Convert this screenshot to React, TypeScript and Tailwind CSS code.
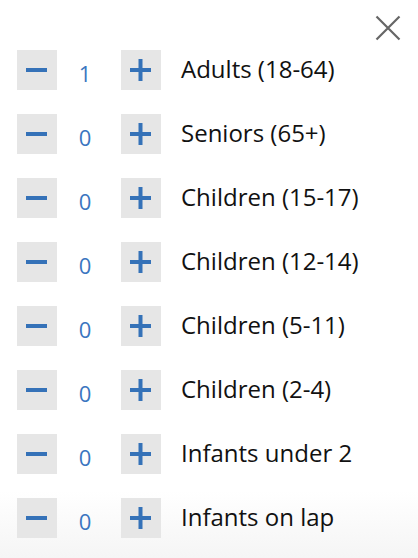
import React from "react";

const rows = [
  { n: 1, label: "Adults (18-64)" },
  { n: 0, label: "Seniors (65+)" },
  { n: 0, label: "Children (15-17)" },
  { n: 0, label: "Children (12-14)" },
  { n: 0, label: "Children (5-11)" },
  { n: 0, label: "Children (2-4)" },
  { n: 0, label: "Infants under 2" },
  { n: 0, label: "Infants on lap" },
];

function Minus() {
  return (
    <svg width="22" height="22" viewBox="0 0 22 22">
      <rect x="0" y="9" width="21" height="4" fill="#3572b8" />
    </svg>
  );
}
function Plus() {
  return (
    <svg width="22" height="22" viewBox="0 0 22 22">
      <rect x="0" y="9" width="21" height="4" fill="#3572b8" />
      <rect x="8.5" y="0" width="4" height="22" fill="#3572b8" />
    </svg>
  );
}

export default function App() {
  return (
    <div
      className="relative w-[418px] h-[558px] overflow-hidden bg-gradient-to-b from-white from-[88%] to-[#f5f5f5]"
      style={{ fontFamily: '"Open Sans", sans-serif' }}
    >
      <button className="absolute top-[15px] right-[17px] w-[26px] h-[26px] flex items-center justify-center">
        <svg width="26" height="26" viewBox="0 0 26 26">
          <path d="M1.5 1.5 L24.5 24.5 M24.5 1.5 L1.5 24.5" stroke="#666" strokeWidth="2.2" />
        </svg>
      </button>
      <div className="flex flex-col gap-6 pt-[50px] pl-[17px]">
        {rows.map((r, i) => (
          <div key={i} className="flex items-center h-10">
            <div className="w-10 h-10 bg-[#e6e6e6] flex items-center justify-center">
              <Minus />
            </div>
            <div className="w-[56px] text-center pt-[5px] text-[22px] text-[#3a76c0] leading-none">
              {r.n}
            </div>
            <div className="ml-[8px] w-10 h-10 bg-[#e6e6e6] flex items-center justify-center">
              <Plus />
            </div>
            <div className="ml-5 text-[24px] text-[#111] leading-none pb-[2px]">{r.label}</div>
          </div>
        ))}
      </div>
    </div>
  );
}
